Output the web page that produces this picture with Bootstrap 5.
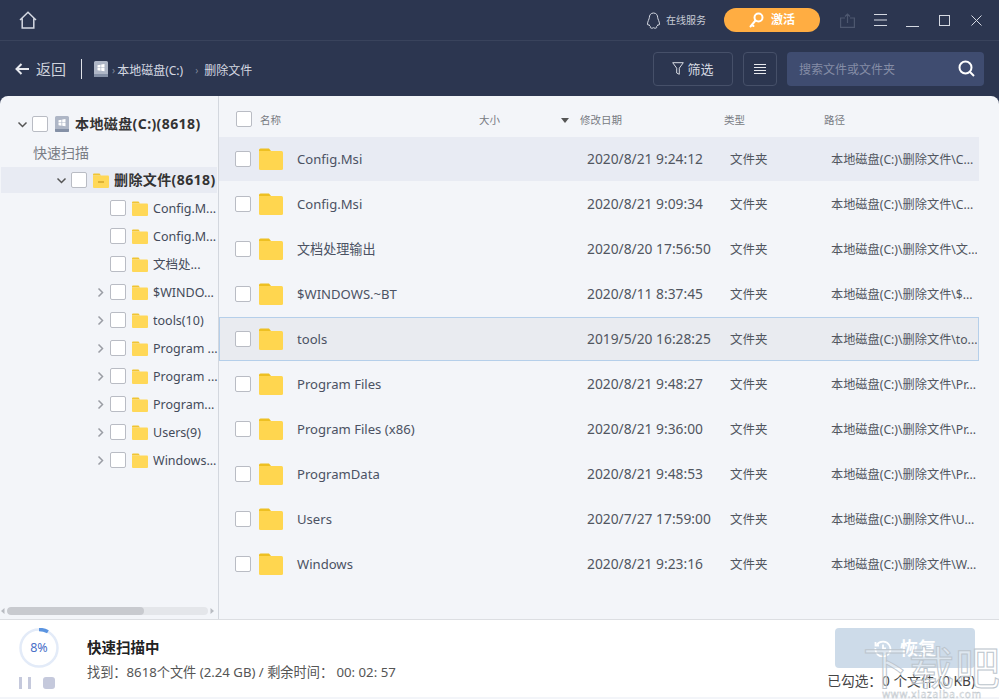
<!DOCTYPE html>
<html lang="zh-CN">
<head>
<meta charset="utf-8">
<title>数据恢复</title>
<link href="https://cdn.jsdelivr.net/npm/bootstrap@5.3.0/dist/css/bootstrap.min.css" rel="stylesheet">
<style>
html,body{height:100%;overflow:hidden}
body{background:#2c3650;font-family:"Noto Sans","Noto Sans CJK SC",sans-serif;color:#444b5a;font-size:14px}
.shell{height:699px;width:999px;position:relative;overflow:hidden}
.topbar{height:41px;border-bottom:1px solid #39435c;padding:0 17px 0 19px;color:#d5d9e2}
.svc{font-size:10px;color:#c8ccd6;margin-left:5px}
.activate{width:96px;height:24px;border-radius:12px;background:#ffad42;color:#fff;font-size:12px;font-weight:700;margin-left:18px;margin-right:20px;gap:7px}
.win-ic{display:block}
.toolbar{height:55px;padding:0 15px;color:#d7dae2}
.back{font-size:15px;margin-left:7px;color:#ced2db;padding-top:2px}
.vsep{width:1px;height:20px;background:#dfe2e8;margin:0 11px 0 15px}
.crumb{font-size:12px;color:#d4d8e1;padding-top:4px}
.crumb-sep{color:#7e8699;font-size:10px;margin:0 2px 0 3px;line-height:1;padding-top:2px}
.tool-btn{height:34px;border:1px solid #465069;border-radius:4px;color:#d7dae2;font-size:13px;background:transparent;gap:3px}
.tool-btn span{padding-top:2px}
.filter{width:80px}
.menu-btn{width:34px;margin:0 10px}
.searchbox{width:197px;height:34px;border-radius:4px;background:#3f4c70;padding:0 9px 0 12px;color:#858da6;font-size:12px}
.searchbox span{padding-top:3px}
.panel{height:524px;background:#f3f5f9;border-radius:8px 8px 0 0;border-bottom:1px solid #dcdee2}
.side{width:219px;border-right:1px solid #d3d7de;padding-top:14px;position:relative}
.tree-row{height:28px;white-space:nowrap;font-size:12.5px;color:#444b5a}
.tree-row .lbl{overflow:hidden;min-width:0;padding-top:2px}
.lv1{padding-left:17px}
.lv2{background:#e8ebf3;margin:1px 1px;height:26px;padding-left:55px}
.lv3{padding-left:95px}
.chev{width:11px;flex:none;margin-right:4px}
.tree-row .strong-lbl{font-weight:700;color:#333;font-size:14px;letter-spacing:.4px;overflow:visible;padding-top:0;margin-top:-1px}
.scan-lbl{padding:0 0 0 33px;font-size:14px;color:#7a7d85}
.ck.form-check-input{width:16px;height:16px;margin:0;flex:none;border:1px solid #b9bcc4;border-radius:2px;background-color:#fff}
.ic-folder{flex:none}
.side-ic{margin:0 5px 0 6px;flex:none}
.hscroll{position:absolute;left:0;right:0;bottom:3px;height:10px}
.track{flex:1;height:8px;background:#e4e6ea;border-radius:4px;margin:0 1px;overflow:hidden}
.thumb{width:137px;height:100%;background:#c8cacf;border-radius:4px}
.list{flex:1;min-width:0}
.list-head{height:41px;padding:5px 0 0 17px;font-size:10.5px;color:#777a82}
.list-head span{padding-top:3px}
.h-name{width:219px;margin-left:8px}.h-size{width:82px}.h-sort{width:19px}.h-date{width:144px}.h-type{width:100px}
.file-row{height:44px;margin-bottom:1px;width:760px;padding-left:16px;border:1px solid transparent;border-width:1px 0}
.file-row.sel{background:#e8ebf3}
.file-row.hov{background:#e9ebf0;border:1px solid #b5cfea;padding-left:15px}
.f-name{width:352px;gap:8px;min-width:0}
.f-name span{margin-left:6px;color:#4b5263;font-size:13.1px;padding-top:1px}
.f-date{width:143px;font-size:13.8px;color:#51565f;padding-top:1px}
.f-type{width:101px;font-size:12.5px;color:#51565f;padding-top:3px}
.f-path{width:146px;font-size:12.2px;color:#51565f;white-space:nowrap;overflow:hidden;padding-top:3px}
.foot{height:77px;background:#fff;padding:0 24px 0 0;position:relative}
.prog-col{width:87px;flex:none;padding-left:19px}
.ring{width:40px;height:40px;position:relative}
.ring b{position:absolute;inset:0;display:flex;align-items:center;justify-content:center;font-weight:400;font-size:12.5px;color:#4a6fc8}
.ctl{margin-top:9px;height:12px}
.bar-p{width:3px;height:12px;background:#c5c9dc;margin-right:6px}
.bar-s{width:12px;height:12px;background:#c5c9dc;border-radius:3px;margin-left:6px}
.scan-title{font-weight:700;font-size:14.5px;color:#222;line-height:20px}
.scan-info{font-size:13.2px;color:#555;margin-top:6px;line-height:18px}
.recover.btn:disabled,.recover{width:140px;height:40px;background:#cddbe9;border-radius:4px;color:#fff;font-size:18px;font-weight:700;gap:8px;border:0;opacity:1}
.picked{font-size:13.7px;color:#444;margin-top:4px;white-space:nowrap;line-height:18px}
.right-col{align-self:flex-start;padding-top:8px}
.bottom-band{height:2px;background:#f3f5f9}
.wm{position:absolute;right:-3px;bottom:-3px;line-height:1;pointer-events:none;text-align:center;width:140px;height:56px;overflow:hidden}
.wm-big{display:block;font-size:45px;line-height:48px;letter-spacing:1px;color:rgba(255,255,255,.35);-webkit-text-stroke:1px #bcc5cd;font-weight:400}
.wm-small{display:block;font-size:10px;line-height:10px;margin-top:-3px;color:rgba(255,255,255,.6);-webkit-text-stroke:.4px #b4bcc4;letter-spacing:.8px}
</style>
</head>
<body>
<svg width="0" height="0" class="position-absolute">
<defs>
<symbol id="folder" viewBox="0 0 24 22"><path d="M0 2a1.5 1.5 0 0 1 1.5-1.5H10L12 3H0z" fill="#eec022"/><path d="M0 3h22.5A1.5 1.5 0 0 1 24 4.500V20.500A1.500 1.500 0 0 1 22.500 22H1.500A1.500 1.500 0 0 1 0 20.500z" fill="#ffd64f"/></symbol>
<symbol id="mini" viewBox="0 0 16 15"><path d="M0 1.500A1 1 0 0 1 1 .5h5.500L8 2.500H0z" fill="#f1c533"/><path d="M0 2.500h15a1 1 0 0 1 1 1V14a1 1 0 0 1-1 1H1a1 1 0 0 1-1-1z" fill="#ffd858"/></symbol>
<symbol id="disk" viewBox="0 0 16 16"><path d="M1 1.500A1.500 1.500 0 0 1 2.500 0h11A1.500 1.500 0 0 1 15 1.500V15a1 1 0 0 1-1 1H2a1 1 0 0 1-1-1z" fill="#aeb6c6"/><path d="M1 13h14v2a1 1 0 0 1-1 1H2a1 1 0 0 1-1-1z" fill="#8490a6"/><path d="M4.500 4.200l3-.5v2.700h-3zM8.200 3.600l3.300-.5v3.300H8.200zM4.500 7h3v2.700l-3-.5zM8.200 7h3.300v3.300l-3.300-.5z" fill="#fff"/></symbol>
<symbol id="cv-d" viewBox="0 0 11 11"><path d="M1.500 3.500l4 4 4-4" fill="none" stroke="#555" stroke-width="1.500"/></symbol>
<symbol id="cv-r" viewBox="0 0 11 11"><path d="M3.500 1.500l4 4-4 4" fill="none" stroke="#9a9da4" stroke-width="1.500"/></symbol>
</defs>
</svg>
<div class="shell d-flex flex-column">
  <div class="topbar d-flex align-items-center">
    <svg width="18" height="18" viewBox="0 0 18 18" fill="none" stroke="#d5d9e2" stroke-width="1.500"><path d="M1 9L9 1.200 17 9M3.200 7.500V17h11.600V7.500"/></svg>
    <div class="ms-auto d-flex align-items-center">
      <svg width="15" height="17" viewBox="0 0 15 17" fill="none" stroke="#d5d9e2" stroke-width="1"><path d="M7.500 1C4.700 1 3.300 3.200 3.300 5.700 3.300 7 1.500 9.500 1.500 12c0 1.200.6 1.500 1.500.5.500 1.300 1 2 1.800 2.500-.8.500-.6 1.200 1 1.200 1 0 1.400-.3 1.700-.5.300.2.700.5 1.700.5 1.600 0 1.800-.7 1-1.200.8-.5 1.300-1.200 1.800-2.500.9 1 1.500.7 1.500-.5 0-2.500-1.800-5-1.800-6.300C11.700 3.200 10.300 1 7.500 1z"/></svg>
      <span class="svc">在线服务</span>
      <div class="activate d-flex align-items-center justify-content-center">
        <svg width="15" height="16" viewBox="0 0 15 16" fill="none" stroke="#fff" stroke-width="2"><circle cx="9.500" cy="5.500" r="4"/><path d="M6.500 8.500L1.500 14.500M3 12.500l1.500 1.500" stroke-linecap="round"/></svg>
        <span>激活</span>
      </div>
      <svg class="win-ic" width="15" height="15" viewBox="0 0 15 15" fill="none" stroke="#4d576f" stroke-width="1.200" style="margin-right:19px"><path d="M5 5H.6v9.400h13.800V5H10M7.500 10V1M5 3.500L7.500 1 10 3.500"/></svg>
      <svg class="win-ic" width="13" height="12" viewBox="0 0 13 12" stroke="#d5d9e2" stroke-width="1" style="margin-right:19px"><path d="M0 .5h13M0 6h13M0 11.500h13"/></svg>
      <svg class="win-ic" width="13" height="13" viewBox="0 0 13 13" stroke="#d5d9e2" stroke-width="1" style="margin-right:20px"><path d="M0 12.500h13"/></svg>
      <svg class="win-ic" width="11" height="11" viewBox="0 0 11 11" fill="none" stroke="#d5d9e2" stroke-width="1" style="margin-right:21px"><rect x=".5" y=".5" width="10" height="10"/></svg>
      <svg class="win-ic" width="11" height="11" viewBox="0 0 11 11" stroke="#d5d9e2" stroke-width="1"><path d="M.5.500l10 10M10.500.500l-10 10"/></svg>
    </div>
  </div>
  <div class="toolbar d-flex align-items-center">
    <svg width="14" height="12" viewBox="0 0 14 12" fill="none" stroke="#e8eaef" stroke-width="2"><path d="M14 6H2M6.500 1L1.500 6l5 5"/></svg>
    <span class="back">返回</span>
    <span class="vsep"></span>
    <svg width="16" height="16"><use href="#disk"/></svg>
    <span class="crumb-sep">›</span><span class="crumb">本地磁盘(C:)</span>
    <span class="crumb-sep" style="margin:0 6px 0 12px">›</span><span class="crumb">删除文件</span>
    <div class="ms-auto d-flex align-items-center">
      <button class="tool-btn filter btn d-flex align-items-center justify-content-center p-0">
        <svg width="12" height="13" viewBox="0 0 12 13" fill="none" stroke="#d7dae2" stroke-width="1"><path d="M.7.700h10.600L7.300 6.200V12.300L4.700 11V6.200z"/></svg><span>筛选</span>
      </button>
      <button class="tool-btn menu-btn btn d-flex align-items-center justify-content-center p-0">
        <svg width="12" height="10" viewBox="0 0 12 10" stroke="#e8eaef" stroke-width="1"><path d="M0 .5h12M0 3.500h12M0 6.500h12M0 9.500h12"/></svg>
      </button>
      <div class="searchbox d-flex align-items-center justify-content-between">
        <span>搜索文件或文件夹</span>
        <svg width="17" height="17" viewBox="0 0 17 17" fill="none" stroke="#fff" stroke-width="2"><circle cx="7.500" cy="7.500" r="6"/><path d="M12 12l4 4"/></svg>
      </div>
    </div>
  </div>
  <div class="panel d-flex">
    <div class="side">
      <div class="tree-row lv1 d-flex align-items-center">
        <svg class="chev" width="11" height="11"><use href="#cv-d"/></svg><input class="ck form-check-input" type="checkbox" aria-label="本地磁盘">
        <svg class="side-ic" width="16" height="16"><use href="#disk"/></svg><span class="lbl strong-lbl">本地磁盘(C:)(8618)</span>
      </div>
      <div class="tree-row scan-lbl d-flex align-items-center">快速扫描</div>
      <div class="tree-row lv2 d-flex align-items-center">
        <svg class="chev" width="11" height="11"><use href="#cv-d"/></svg><input class="ck form-check-input" type="checkbox" aria-label="删除文件">
        <svg class="side-ic" width="16" height="15" viewBox="0 0 16 15"><use href="#mini"/><path d="M5 9h6" stroke="#c99a1e" stroke-width="1.200"/></svg><span class="lbl strong-lbl">删除文件(8618)</span>
      </div>
      <div class="tree-row lv3 d-flex align-items-center"><span class="chev"></span><input class="ck form-check-input" type="checkbox" aria-label="Config.Msi"><svg class="side-ic" width="16" height="15"><use href="#mini"/></svg><span class="lbl">Config.M...</span></div>
      <div class="tree-row lv3 d-flex align-items-center"><span class="chev"></span><input class="ck form-check-input" type="checkbox" aria-label="Config.Msi"><svg class="side-ic" width="16" height="15"><use href="#mini"/></svg><span class="lbl">Config.M...</span></div>
      <div class="tree-row lv3 d-flex align-items-center"><span class="chev"></span><input class="ck form-check-input" type="checkbox" aria-label="文档处理输出"><svg class="side-ic" width="16" height="15"><use href="#mini"/></svg><span class="lbl">文档处...</span></div>
      <div class="tree-row lv3 d-flex align-items-center"><svg class="chev" width="11" height="11"><use href="#cv-r"/></svg><input class="ck form-check-input" type="checkbox" aria-label="$WINDOWS"><svg class="side-ic" width="16" height="15"><use href="#mini"/></svg><span class="lbl">$WINDO...</span></div>
      <div class="tree-row lv3 d-flex align-items-center"><svg class="chev" width="11" height="11"><use href="#cv-r"/></svg><input class="ck form-check-input" type="checkbox" aria-label="tools"><svg class="side-ic" width="16" height="15"><use href="#mini"/></svg><span class="lbl">tools(10)</span></div>
      <div class="tree-row lv3 d-flex align-items-center"><svg class="chev" width="11" height="11"><use href="#cv-r"/></svg><input class="ck form-check-input" type="checkbox" aria-label="Program Files"><svg class="side-ic" width="16" height="15"><use href="#mini"/></svg><span class="lbl">Program ...</span></div>
      <div class="tree-row lv3 d-flex align-items-center"><svg class="chev" width="11" height="11"><use href="#cv-r"/></svg><input class="ck form-check-input" type="checkbox" aria-label="Program Files (x86)"><svg class="side-ic" width="16" height="15"><use href="#mini"/></svg><span class="lbl">Program ...</span></div>
      <div class="tree-row lv3 d-flex align-items-center"><svg class="chev" width="11" height="11"><use href="#cv-r"/></svg><input class="ck form-check-input" type="checkbox" aria-label="ProgramData"><svg class="side-ic" width="16" height="15"><use href="#mini"/></svg><span class="lbl">Program...</span></div>
      <div class="tree-row lv3 d-flex align-items-center"><svg class="chev" width="11" height="11"><use href="#cv-r"/></svg><input class="ck form-check-input" type="checkbox" aria-label="Users"><svg class="side-ic" width="16" height="15"><use href="#mini"/></svg><span class="lbl">Users(9)</span></div>
      <div class="tree-row lv3 d-flex align-items-center"><svg class="chev" width="11" height="11"><use href="#cv-r"/></svg><input class="ck form-check-input" type="checkbox" aria-label="Windows"><svg class="side-ic" width="16" height="15"><use href="#mini"/></svg><span class="lbl">Windows...</span></div>
      <div class="hscroll d-flex align-items-center">
        <svg width="6" height="8" viewBox="0 0 6 8"><path d="M4.500 1L1 4l3.500 3z" fill="#b9bcc2"/></svg>
        <div class="track"><div class="thumb"></div></div>
        <svg width="6" height="8" viewBox="0 0 6 8"><path d="M1.500 1L5 4 1.500 7z" fill="#b9bcc2"/></svg>
        <span style="width:3px"></span>
      </div>
    </div>
    <div class="list">
      <div class="list-head d-flex align-items-center">
        <input class="ck form-check-input" type="checkbox" aria-label="全选">
        <span class="h-name">名称</span><span class="h-size">大小</span>
        <span class="h-sort"><svg width="8" height="5" viewBox="0 0 8 5" class="d-block"><path d="M0 0h8L4 5z" fill="#555"/></svg></span>
        <span class="h-date">修改日期</span><span class="h-type">类型</span><span>路径</span>
      </div>
      <div class="file-row sel d-flex align-items-center"><div class="f-name d-flex align-items-center flex-none"><input class="ck form-check-input" type="checkbox" aria-label="选择"><svg class="ic-folder" width="24" height="22"><use href="#folder"/></svg><span>Config.Msi</span></div><div class="f-date">2020/8/21 9:24:12</div><div class="f-type">文件夹</div><div class="f-path">本地磁盘(C:)\删除文件\C...</div></div>
      <div class="file-row d-flex align-items-center"><div class="f-name d-flex align-items-center"><input class="ck form-check-input" type="checkbox" aria-label="选择"><svg class="ic-folder" width="24" height="22"><use href="#folder"/></svg><span>Config.Msi</span></div><div class="f-date">2020/8/21 9:09:34</div><div class="f-type">文件夹</div><div class="f-path">本地磁盘(C:)\删除文件\C...</div></div>
      <div class="file-row d-flex align-items-center"><div class="f-name d-flex align-items-center"><input class="ck form-check-input" type="checkbox" aria-label="选择"><svg class="ic-folder" width="24" height="22"><use href="#folder"/></svg><span>文档处理输出</span></div><div class="f-date">2020/8/20 17:56:50</div><div class="f-type">文件夹</div><div class="f-path">本地磁盘(C:)\删除文件\文...</div></div>
      <div class="file-row d-flex align-items-center"><div class="f-name d-flex align-items-center"><input class="ck form-check-input" type="checkbox" aria-label="选择"><svg class="ic-folder" width="24" height="22"><use href="#folder"/></svg><span>$WINDOWS.~BT</span></div><div class="f-date">2020/8/11 8:37:45</div><div class="f-type">文件夹</div><div class="f-path">本地磁盘(C:)\删除文件\$...</div></div>
      <div class="file-row hov d-flex align-items-center"><div class="f-name d-flex align-items-center"><input class="ck form-check-input" type="checkbox" aria-label="选择"><svg class="ic-folder" width="24" height="22"><use href="#folder"/></svg><span>tools</span></div><div class="f-date">2019/5/20 16:28:25</div><div class="f-type">文件夹</div><div class="f-path">本地磁盘(C:)\删除文件\to...</div></div>
      <div class="file-row d-flex align-items-center"><div class="f-name d-flex align-items-center"><input class="ck form-check-input" type="checkbox" aria-label="选择"><svg class="ic-folder" width="24" height="22"><use href="#folder"/></svg><span>Program Files</span></div><div class="f-date">2020/8/21 9:48:27</div><div class="f-type">文件夹</div><div class="f-path">本地磁盘(C:)\删除文件\Pr...</div></div>
      <div class="file-row d-flex align-items-center"><div class="f-name d-flex align-items-center"><input class="ck form-check-input" type="checkbox" aria-label="选择"><svg class="ic-folder" width="24" height="22"><use href="#folder"/></svg><span>Program Files (x86)</span></div><div class="f-date">2020/8/21 9:36:00</div><div class="f-type">文件夹</div><div class="f-path">本地磁盘(C:)\删除文件\Pr...</div></div>
      <div class="file-row d-flex align-items-center"><div class="f-name d-flex align-items-center"><input class="ck form-check-input" type="checkbox" aria-label="选择"><svg class="ic-folder" width="24" height="22"><use href="#folder"/></svg><span>ProgramData</span></div><div class="f-date">2020/8/21 9:48:53</div><div class="f-type">文件夹</div><div class="f-path">本地磁盘(C:)\删除文件\Pr...</div></div>
      <div class="file-row d-flex align-items-center"><div class="f-name d-flex align-items-center"><input class="ck form-check-input" type="checkbox" aria-label="选择"><svg class="ic-folder" width="24" height="22"><use href="#folder"/></svg><span>Users</span></div><div class="f-date">2020/7/27 17:59:00</div><div class="f-type">文件夹</div><div class="f-path">本地磁盘(C:)\删除文件\U...</div></div>
      <div class="file-row d-flex align-items-center"><div class="f-name d-flex align-items-center"><input class="ck form-check-input" type="checkbox" aria-label="选择"><svg class="ic-folder" width="24" height="22"><use href="#folder"/></svg><span>Windows</span></div><div class="f-date">2020/8/21 9:23:16</div><div class="f-type">文件夹</div><div class="f-path">本地磁盘(C:)\删除文件\W...</div></div>
    </div>
  </div>
  <div class="foot d-flex align-items-center">
    <div class="prog-col">
      <div class="ring">
        <svg width="40" height="40" viewBox="0 0 40 40" fill="none"><circle cx="20" cy="20" r="18.500" stroke="#e3ebf8" stroke-width="2.500"/><circle cx="20" cy="20" r="18.500" stroke="#5b94e0" stroke-width="3.500" stroke-dasharray="9.300 107" transform="rotate(-90 20 20)"/></svg>
        <b>8%</b>
      </div>
      <div class="ctl d-flex"><span class="bar-p"></span><span class="bar-p"></span><span class="bar-s"></span></div>
    </div>
    <div class="flex-grow-1">
      <div class="scan-title">快速扫描中</div>
      <div class="scan-info">找到：8618个文件 (2.24 GB) / 剩余时间： 00: 02: 57</div>
    </div>
    <div class="right-col d-flex flex-column align-items-end">
      <button class="recover btn d-flex align-items-center justify-content-center p-0" disabled>
        <svg width="18" height="18" viewBox="0 0 18 18" fill="none" stroke="#fff" stroke-width="1.800"><path d="M3 5.500A7.500 7.500 0 1 1 1.500 9M1.500 3v3.500H5M9 5.500V9.500h3"/></svg><span>恢复</span>
      </button>
      <div class="picked">已勾选：0 个文件 (0 KB)</div>
    </div>
    <div class="wm" aria-hidden="true"><span class="wm-big">下载吧</span><span class="wm-small">www.xiazaiba.com</span></div>
  </div>
  <div class="bottom-band"></div>
</div>
<script src="https://cdn.jsdelivr.net/npm/bootstrap@5.3.0/dist/js/bootstrap.bundle.min.js"></script>
</body>
</html>
